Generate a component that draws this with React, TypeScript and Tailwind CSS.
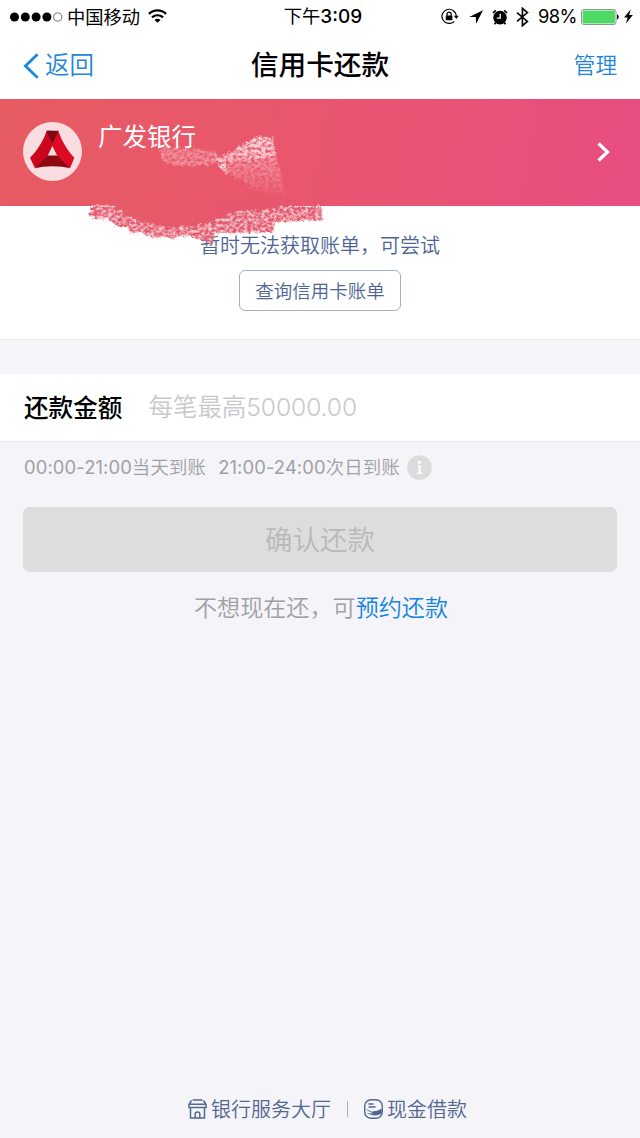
import type { ReactNode } from 'react'
import { useState } from 'react'

function StatusBar() {
  return (
    <div className="grid h-8 grid-cols-3 items-center whitespace-nowrap text-[18.3px] leading-8 text-black">
      <div className="flex h-8 items-center pl-[10px]">
        <svg className="h-[10px] w-[53px]" viewBox="0 0 53 10">
          <circle cx="4.5" cy="5" r="4.5" />
          <circle cx="15.3" cy="5" r="4.5" />
          <circle cx="26.1" cy="5" r="4.5" />
          <circle cx="36.9" cy="5" r="4.5" />
          <circle cx="47.7" cy="5" r="4.1" fill="none" stroke="#333" strokeWidth="0.7" />
        </svg>
        <span className="ml-1 font-normal">中国移动</span>
        <svg className="mb-[2px] ml-2 h-[14px] w-[19px]" viewBox="0 0 19 14" fill="none" stroke="#000" strokeWidth="2.2">
          <path d="M.9 4.9C5.7.2 13.3.2 18.1 4.9" />
          <path d="M4 8.4c3.100-2.900 7.900-2.900 11 0" />
          <path d="M9.500 13.800 6.500 10.900c1.600-1.500 4.400-1.500 6 0z" fill="#000" stroke="none" />
        </svg>
      </div>
      <div className="pl-[6px] text-center font-normal">
        下午<span className="text-[19px] font-medium">3:09</span>
      </div>
      <div className="flex h-8 items-center justify-end pr-[7px]">
        <svg className="h-[17px] w-[18px]" viewBox="0 0 18 17" fill="none" stroke="#000" strokeWidth="1.2">
          <path d="M13.2 13.3A7.1 7.1 0 1 1 15.2 8.3" />
          <path d="M12.9 7.8h4.8l-2.4 3.1z" fill="#000" stroke="none" />
          <path d="M6 8V6.2a2.1 2.1 0 0 1 4.2 0V8" />
          <rect x="4.8" y="7.5" width="6.6" height="4.8" rx="0.6" fill="#000" stroke="none" />
        </svg>
        <svg className="ml-[10px] h-[14px] w-[14px]" viewBox="0 0 14 14">
          <path d="M14 .3.3 6.9l6.500.2.300 6.700z" />
        </svg>
        <svg className="ml-[9px] h-[16px] w-[16px]" viewBox="0 0 16 16">
          <circle cx="8" cy="8.600" r="6.800" />
          <path d="m.9 4 3-2.700M15.100 4l-3-2.700M3.800 13.500l-1.300 1.700m9.700-1.700 1.300 1.700" stroke="#000" strokeWidth="1.600" />
          <path d="M8.200 4.800v4.400H4.800" fill="none" stroke="#fff" strokeWidth="1.300" />
        </svg>
        <svg className="ml-2 h-[20px] w-[13px]" viewBox="0 0 13 20" fill="none" stroke="#000" strokeWidth="1.600">
          <path d="m1 5.600 10.400 8.800-5 4.300V1.300l5 4.300L1 14.400" />
        </svg>
        <span className="mb-px ml-[9px] text-[18.300px] font-normal tracking-[-0.500px]">98%</span>
        <svg className="ml-1 h-[16px] w-[38px]" viewBox="0 0 38 16">
          <rect x="0.500" y="0.500" width="34.500" height="15" rx="2.200" fill="#fff" stroke="#777" strokeWidth="0.800" />
          <rect x="1.600" y="1.600" width="32.300" height="12.800" rx="1" fill="#4cd964" />
          <path d="M36 5.500c2.200.5 2.200 4.500 0 5z" />
        </svg>
        <svg className="ml-[5px] h-[15px] w-[9px]" viewBox="0 0 9 15">
          <path d="M6.800.2 0 8.400h3.700L1.800 14.800 8.900 6H5.100z" />
        </svg>
      </div>
    </div>
  )
}

function NavBar() {
  return (
    <header className="grid h-[67px] grid-cols-[1fr_auto_1fr] items-center whitespace-nowrap px-[23px] text-[#1c87dc]">
      <button className="flex items-center text-[24.500px]">
        <svg className="mr-[6px] h-[26px] w-[16px]" viewBox="0 0 16 26" fill="none" stroke="currentColor" strokeWidth="2.800">
          <path d="M14.600 1.300 2.400 13l12.200 11.700" />
        </svg>
        返回
      </button>
      <h1 className="text-[27.700px] font-medium text-black">信用卡还款</h1>
      <button className="pb-px text-right text-[21.600px]">管理</button>
    </header>
  )
}

function BankLogo() {
  return (
    <svg className="h-[60px] w-[60px]" viewBox="0 0 60 60">
      <circle cx="29.500" cy="29.500" r="29.500" fill="#fadde1" />
      <path d="M22 33.500h15.500L47 46.300c-9-2.700-26-2.700-35 0z" fill="#8c0914" />
      <path d="M23.700 8.700h6L31 20.500 29.300 24l-4.600 9.700L12 46.300 7 35.700c7-7 13-16 16.700-27z" fill="#cb061d" />
      <path d="M35.300 8.700c3.700 11 9.500 20 16 27L47 46.300 34.300 33.700 29.300 24l-1.500-4z" fill="#dc0a25" />
      <path d="M23.700 8.700h11.600L29.400 22z" fill="#7d0712" />
    </svg>
  )
}

// Chalky brush strokes that hide the card number
function Scribble() {
  return (
    <svg className="pointer-events-none absolute left-[80px] top-0 h-[150px] w-[260px]" viewBox="0 0 260 150">
      <defs>
        <filter id="chalk" x="-10%" y="-10%" width="120%" height="120%">
          <feTurbulence type="fractalNoise" baseFrequency="0.28 0.35" numOctaves="4" seed="11" result="noise" />
          <feColorMatrix in="noise" values="0 0 0 0 0  0 0 0 0 0  0 0 0 0 0  2.6 0 0 0 -0.7" result="mask" />
          <feDisplacementMap in="SourceGraphic" in2="noise" scale="7" xChannelSelector="R" yChannelSelector="G" result="moved" />
          <feComposite in="moved" in2="mask" operator="in" />
          <feGaussianBlur stdDeviation="0.55" />
        </filter>
        <filter id="edge">
          <feTurbulence type="fractalNoise" baseFrequency="0.2" numOctaves="3" seed="3" />
          <feDisplacementMap in="SourceGraphic" scale="7" xChannelSelector="R" yChannelSelector="G" />
          <feGaussianBlur stdDeviation="0.7" />
        </filter>
        <linearGradient id="patch" gradientUnits="userSpaceOnUse" x1="0" y1="36" x2="0" y2="98">
          <stop offset="0" stopColor="#fff" stopOpacity="0.7" />
          <stop offset="0.45" stopColor="#fff" stopOpacity="0.36" />
          <stop offset="1" stopColor="#fff" stopOpacity="0.04" />
        </linearGradient>
        <linearGradient id="cover" x1="0" y1="0" x2="1" y2="0">
          <stop offset="0" stopColor="#e75b68" />
          <stop offset="1" stopColor="#e8556f" />
        </linearGradient>
      </defs>
      <path
        d="M12 107H241l2 14-48 2-1 10-59 1-2 12-11-5-17-5-14 4-6-3-13 2-11-6-9 1-6-6-10-1-8-8-12 1-7-4z"
        fill="#f5b4bf"
        opacity="0.7"
        filter="url(#edge)"
      />
      <path
        d="M12 107H241l2 14-48 2-1 10-59 1-2 12-11-5-17-5-14 4-6-3-13 2-11-6-9 1-6-6-10-1-8-8-12 1-7-4z"
        fill="#e4566b"
        filter="url(#chalk)"
      />
      <path d="M30 100H212l-15 9-44 4-24 9-18 5-26 1-26-6-20-10z" fill="url(#cover)" filter="url(#edge)" />
      {/* bare spots left between the strokes */}
      <path d="M80 50 96 48l39 4 3 10-8 5H96l-15-6z" fill="#fff" opacity="0.34" filter="url(#chalk)" />
      <path d="m138 60 39-23 16 1 4 22 10 36-30-4-26-16-13-8z" fill="url(#patch)" filter="url(#chalk)" />
      <path d="m144 58 34-20 14 1 4 18-25 5-16-2-11 13-7-8z" fill="#fff" opacity="0.4" filter="url(#chalk)" />
      <path d="M134 55l8 10 5 10" stroke="#fff" strokeWidth="4" fill="none" opacity="0.5" filter="url(#chalk)" />
      {/* the lower edge of the bank name is partly painted over */}
      <path d="M18 50 44 47l20 5 14-1" stroke="#e75b69" strokeWidth="5" fill="none" opacity="0.65" filter="url(#chalk)" />
    </svg>
  )
}

function CardBanner() {
  return (
    <section className="relative h-[107px]">
      <div className="flex h-full items-start bg-linear-[100deg,#e75b62_0%,#e9566e_48%,#e74d80_100%] pl-[23px] pr-[30px] text-white">
        <div className="mt-[23px]">
          <BankLogo />
        </div>
        <h2 className="ml-[15px] mt-[20px] flex-1 text-[24.500px] font-normal leading-9">广发银行</h2>
        <svg className="mt-[43px] h-[20px] w-[13px]" viewBox="0 0 13 20" fill="none" stroke="#fff" strokeWidth="3.200">
          <path d="m1.500 1.500 9 8.500-9 8.500" />
        </svg>
      </div>
      <Scribble />
    </section>
  )
}

function BillNotice() {
  return (
    <section className="flex h-[134px] flex-col items-center whitespace-nowrap border-b border-[#e8e8eb] bg-white pt-[26px] text-[#4d6494]">
      <p className="text-[20px] leading-[29px]">暂时无法获取账单，可尝试</p>
      <button className="mt-[9px] h-[41px] w-[162px] rounded-[6px] border border-[#a3b0ca] pt-[2px] text-[18.500px]">
        查询信用卡账单
      </button>
    </section>
  )
}

function FooterLink({ icon, children }: { icon: ReactNode; children: ReactNode }) {
  return (
    <a className="flex items-center gap-1">
      {icon}
      <span className="pt-px">{children}</span>
    </a>
  )
}

export default function App() {
  const [amount, setAmount] = useState('')

  return (
    <div className="flex h-[1138px] w-[640px] flex-col overflow-hidden bg-[#f4f4f9] font-['Inter','Noto_Sans_CJK_SC',sans-serif] font-[350]">
      <div className="bg-white">
        <StatusBar />
        <NavBar />
      </div>
      <CardBanner />
      <BillNotice />

      <label className="mt-[34px] flex h-[68px] items-center whitespace-nowrap border-b border-[#e9e9ed] bg-white px-6 text-[24.600px]">
        <span className="pt-[2px] font-medium text-black">还款金额</span>
        <input
          className="ml-[26px] flex-1 tracking-[-0.100px] outline-none placeholder:text-[#c9c9cc]"
          placeholder="每笔最高50000.00"
          value={amount}
          onChange={(e) => setAmount(e.target.value)}
        />
      </label>

      <div className="mt-[12px] flex h-7 items-center whitespace-nowrap px-6 text-[18.400px] tracking-[0.200px] text-[#a0a0a3]">
        <span>
          <span className="font-normal tracking-[0.100px]">00:00-21:00</span>当天到账
        </span>
        <span className="ml-[12px]">
          <span className="font-normal tracking-[0.100px]">21:00-24:00</span>次日到账
        </span>
        <svg className="mb-[2px] ml-[7px] h-[25px] w-[25px]" viewBox="0 0 25 25">
          <circle cx="12.500" cy="12.500" r="12.300" fill="#dcdcdd" />
          <circle cx="12.300" cy="7.300" r="1.700" fill="#fff" />
          <path d="M10.300 10.500h3.500v7.300h1.500v1.100h-5v-1.100h1.300v-6.200h-1.300z" fill="#fff" />
        </svg>
      </div>

      <button className="mx-[23px] mt-[25px] h-[65px] rounded-[7px] bg-[#ddd] pt-[2px] text-[27.500px] text-[#b9b9b9]">
        确认还款
      </button>
      <p className="mt-[18px] whitespace-nowrap pl-[2px] text-center text-[23.100px] leading-9 text-[#a0a0a3]">
        不想现在还，可<a className="text-[#1583e0]">预约还款</a>
      </p>

      <footer className="mb-[14px] mt-auto flex h-[30px] items-center justify-center whitespace-nowrap pl-[15px] text-[20px] text-[#53678f]">
        <FooterLink
          icon={
            <svg className="h-[20px] w-[19px]" viewBox="0 0 19 20" fill="none" stroke="currentColor" strokeWidth="1.500">
              <path d="M4.500 1h10M3.500 1.500 1 5.500v3h17v-3l-2.500-4M1.500 5.300h16M2.500 8.500V19h14V8.500M7.200 19v-4.200c0-2.400 4.600-2.400 4.600 0V19" />
            </svg>
          }
        >
          银行服务大厅
        </FooterLink>
        <span className="mx-4 h-4 w-px bg-[#a8b1c4]" />
        <FooterLink
          icon={
            <svg className="h-[20px] w-[19px]" viewBox="0 0 19 20" fill="none" stroke="currentColor" strokeWidth="1.400">
              <rect x="0.700" y="0.700" width="17.600" height="18.600" rx="6.500" />
              <path d="M4.500 5h5M4.500 8h7" />
              <path d="M1.500 10.500c3-.3 4.500 2 6.500 2.200 1.300-.8 3-.9 4.500-.7l5-2.200.5 4c-3.500 3.500-9.500 3.500-15.500.2 2.500.5 4.500.7 6.500.3z" fill="currentColor" stroke="none" />
            </svg>
          }
        >
          现金借款
        </FooterLink>
      </footer>
    </div>
  )
}
